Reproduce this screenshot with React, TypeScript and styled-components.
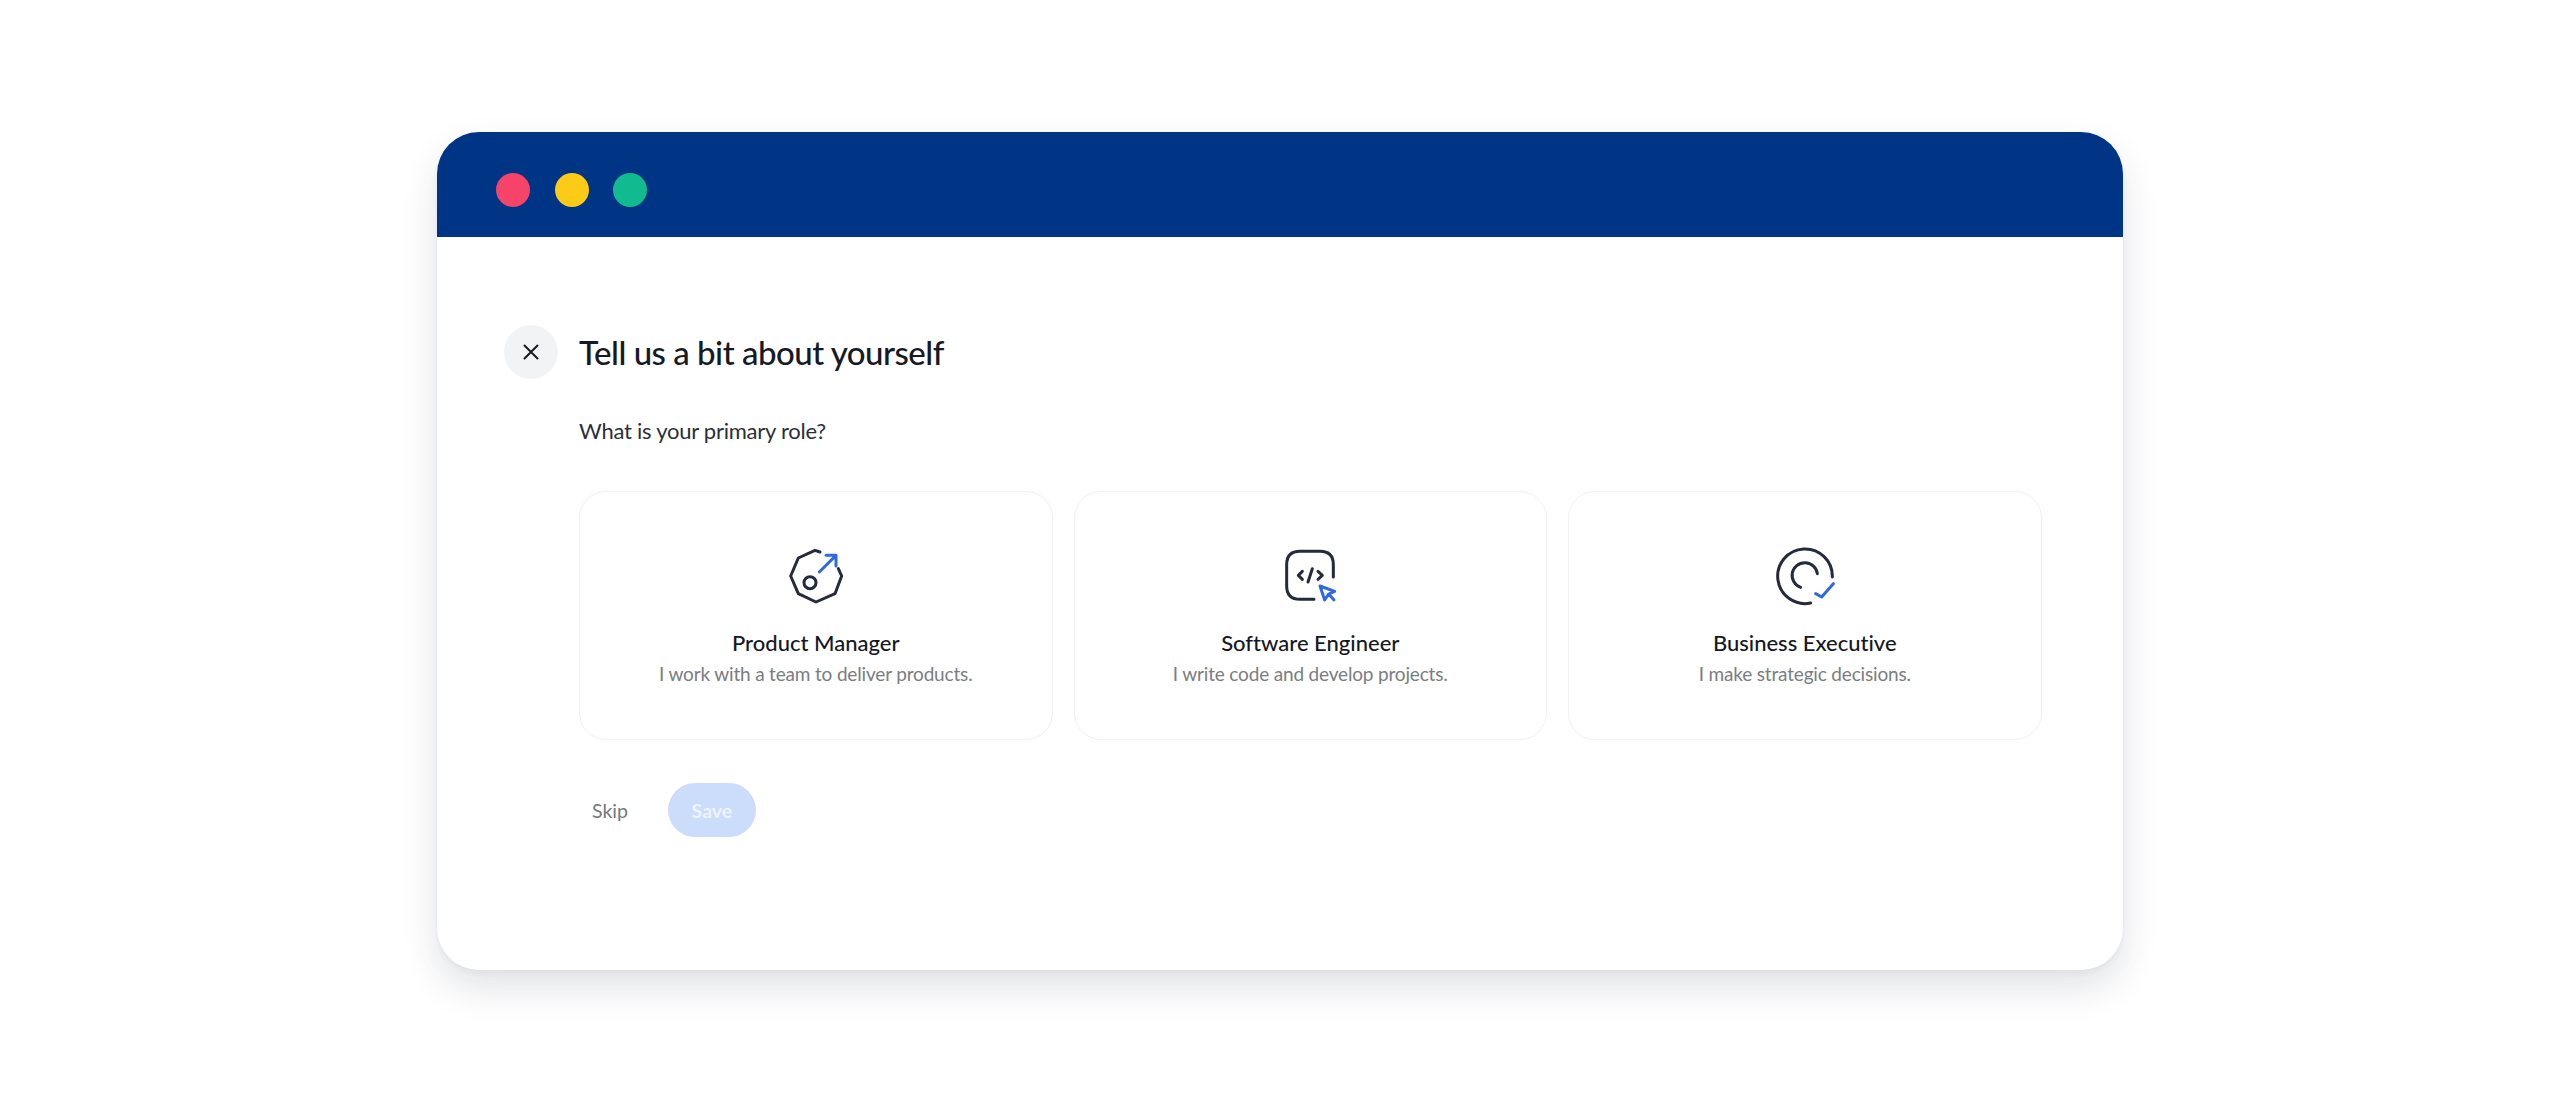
import React from 'react'
import styled, { createGlobalStyle } from 'styled-components'

const GlobalStyle = createGlobalStyle`
  html, body {
    margin: 0;
    padding: 0;
    background: #ffffff;
  }
  body {
    font-family: "Lato", "Liberation Sans", sans-serif;
    font-variant-ligatures: none;
  }
`

const INK = '#252b3d'
const BLUE = '#3169df'

const ManagerIcon = () => (
  <svg width="60" height="60" viewBox="48 32 180 180" fill="none" strokeWidth="9" strokeLinecap="round" strokeLinejoin="round">
    <path d="M150 50 L135 45 L85 68 L62 122 L85 175 L138 200 L195 175 L215 122 L205 100" stroke={INK} />
    <circle cx="120" cy="142" r="18" stroke={INK} />
    <path d="M148 110 L198 60 M168 60 H198 V92" stroke={BLUE} />
  </svg>
)

const EngineerIcon = () => (
  <svg width="60" height="60" viewBox="28 32 180 180" fill="none" strokeWidth="9" strokeLinecap="round" strokeLinejoin="round">
    <path d="M130 192 H88 Q48 192 48 152 V88 Q48 48 88 48 H148 Q188 48 188 88 V125" stroke={INK} />
    <path d="M95 108 L83 120 L95 132 M125 100 L112 140 M142 108 L155 120 L142 132" stroke={INK} />
    <path d="M148 152 L192 168 L174 176 L162 194 Z M174 176 L190 194" stroke={BLUE} />
  </svg>
)

const ExecutiveIcon = () => (
  <svg width="60" height="60" viewBox="28 32 180 180" fill="none" strokeWidth="9" strokeLinecap="round" strokeLinejoin="round">
    <path d="M200 125 A82 82 0 1 0 135 203" stroke={INK} />
    <path d="M155 115 A38 38 0 1 0 105 156" stroke={INK} />
    <path d="M150 175 L168 185 L203 145" stroke={BLUE} />
  </svg>
)

const roles = [
  { title: 'Product Manager', text: 'I work with a team to deliver products.', icon: <ManagerIcon /> },
  { title: 'Software Engineer', text: 'I write code and develop projects.', icon: <EngineerIcon /> },
  { title: 'Business Executive', text: 'I make strategic decisions.', icon: <ExecutiveIcon /> },
]

const App = () => {
  return (
    <Page>
      <GlobalStyle />
      <Window>
        <TitleBar>
          <Dot color="#f5436a" />
          <Dot color="#fbcb18" />
          <Dot color="#12ba8f" />
        </TitleBar>
        <Body>
          <Heading>
            <CloseButton aria-label="Close">
              <svg width="20" height="20" viewBox="0 0 20 20" fill="none" stroke="#161a25" strokeWidth="2" strokeLinecap="round">
                <path d="M3.5 3.5 L16.5 16.5 M16.5 3.5 L3.5 16.5" />
              </svg>
            </CloseButton>
            <Title>Tell us a bit about yourself</Title>
          </Heading>
          <Content>
            <Question>What is your primary role?</Question>
            <Cards>
              {roles.map((role) => (
                <Card key={role.title}>
                  {role.icon}
                  <CardTitle>{role.title}</CardTitle>
                  <CardText>{role.text}</CardText>
                </Card>
              ))}
            </Cards>
            <Actions>
              <SkipButton>Skip</SkipButton>
              <SaveButton>Save</SaveButton>
            </Actions>
          </Content>
        </Body>
      </Window>
    </Page>
  )
}

export default App

const Page = styled.div`
  height: 1102px;
  padding-top: 132px;
  box-sizing: border-box;
  overflow: hidden;
`

const Window = styled.div`
  width: 1686px;
  height: 838px;
  margin: 0 auto;
  border-radius: 42px;
  background: #ffffff;
  box-shadow: 0 18px 36px rgba(30, 40, 70, 0.13), 0 2px 6px rgba(30, 40, 70, 0.05);
`

const TitleBar = styled.div`
  height: 105px;
  padding: 11px 0 0 59px;
  box-sizing: border-box;
  display: flex;
  align-items: center;
  gap: 24.5px;
  background: #003585;
  border-radius: 42px 42px 0 0;
`

const Dot = styled.span<{ color: string }>`
  width: 34px;
  height: 34px;
  border-radius: 50%;
  background: ${(props) => props.color};
`

const Body = styled.div`
  padding: 88px 82px 0 67px;
`

const Heading = styled.div`
  display: flex;
  align-items: center;
  gap: 21px;
`

const CloseButton = styled.button`
  width: 54px;
  height: 54px;
  padding: 0;
  border: none;
  border-radius: 50%;
  background: #f1f3f5;
  display: flex;
  align-items: center;
  justify-content: center;
`

const Title = styled.h1`
  margin: 0;
  font-size: 33px;
  font-weight: 500;
  letter-spacing: -0.5px;
  color: #161a25;
  line-height: 54px;
`

const Content = styled.div`
  margin-left: 75px;
`

const Question = styled.p`
  margin: 37px 0 0;
  font-size: 22px;
  letter-spacing: -0.25px;
  line-height: 30px;
  color: #2b2f3a;
`

const Cards = styled.div`
  margin-top: 45px;
  display: grid;
  grid-template-columns: repeat(3, 473.5px);
  gap: 21px;
`

const Card = styled.div`
  height: 249px;
  padding-top: 54px;
  box-sizing: border-box;
  border: 1.5px solid #f0f1f3;
  border-radius: 27px;
  display: flex;
  flex-direction: column;
  align-items: center;
`

const CardTitle = styled.div`
  margin-top: 22px;
  font-size: 22px;
  font-weight: 500;
  line-height: 30px;
  color: #15181f;
`

const CardText = styled.div`
  margin-top: 1px;
  font-size: 19px;
  letter-spacing: -0.17px;
  line-height: 30px;
  color: #7a7d82;
`

const Actions = styled.div`
  margin-top: 43px;
  display: flex;
  align-items: center;
  gap: 40px;
  padding-left: 13px;
`

const SkipButton = styled.button`
  padding: 0;
  border: none;
  background: none;
  font-family: inherit;
  font-size: 19.5px;
  color: #74787e;
`

const SaveButton = styled.button`
  width: 88px;
  height: 54px;
  padding: 0;
  border: none;
  border-radius: 27px;
  background: #ccdcfb;
  font-family: inherit;
  font-size: 19.5px;
  font-weight: 700;
  color: #eef3fe;
`
